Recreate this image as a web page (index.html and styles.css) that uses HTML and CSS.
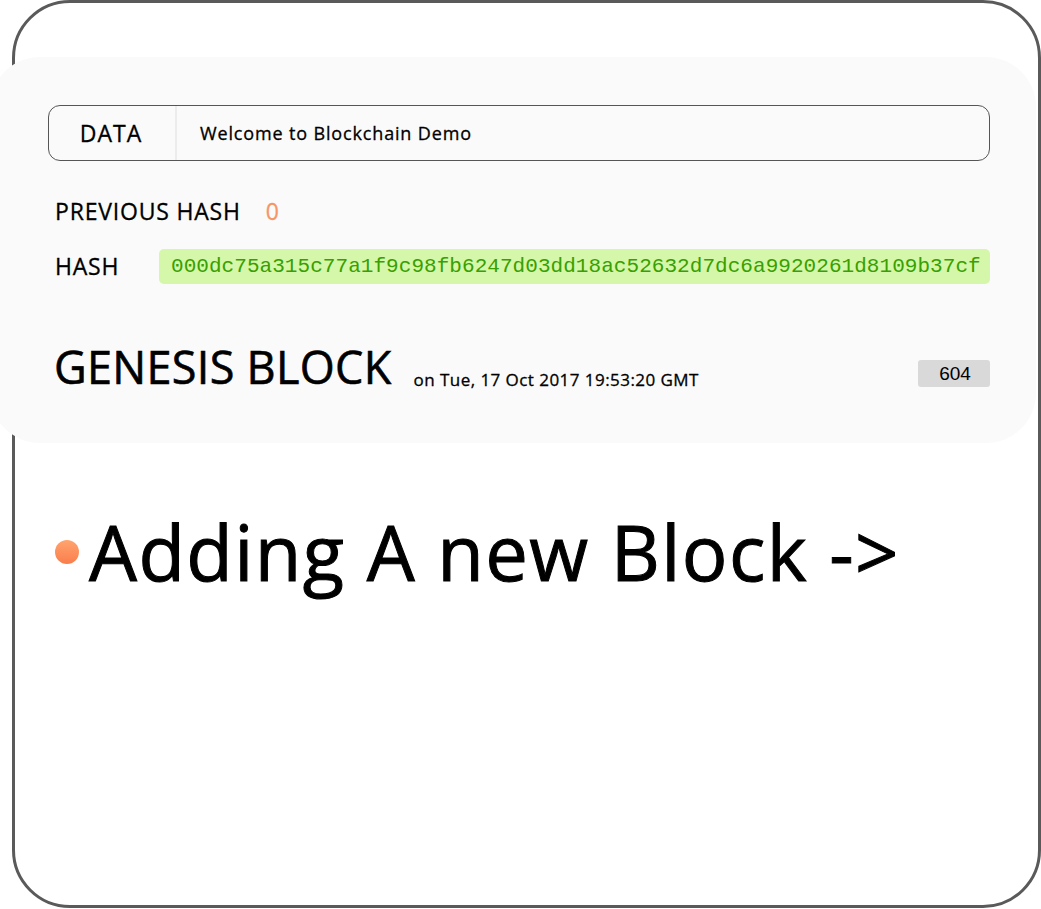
FILE: index.html
```html
<!DOCTYPE html>
<html lang="en">
<head>
<meta charset="utf-8">
<title>Blockchain Demo</title>
<link rel="stylesheet" href="styles.css">
</head>
<body>
<div class="frame">
  <section class="block">
    <div class="data-row">
      <div class="data-label">DATA</div>
      <div class="data-value">Welcome to Blockchain Demo</div>
    </div>
    <div class="field prev-row">
      <span class="label prev-label">PREVIOUS HASH</span>
      <span class="prev">0</span>
    </div>
    <div class="field hash-row">
      <span class="label hash-label">HASH</span>
      <span class="hash">000dc75a315c77a1f9c98fb6247d03dd18ac52632d7dc6a9920261d8109b37cf</span>
    </div>
    <div class="footer">
      <h2 class="title">GENESIS BLOCK</h2>
      <span class="date">on Tue, 17 Oct 2017 19:53:20 GMT</span>
      <span class="nonce">604</span>
    </div>
  </section>
  <h1 class="adding"><span class="dot"></span><span class="adding-text">Adding A new Block -&gt;</span></h1>
</div>
</body>
</html>
```

FILE: styles.css
```css
* { box-sizing: border-box; }
html, body { margin: 0; padding: 0; background: #ffffff; }
body {
  font-family: "Open Sans", "DejaVu Sans", sans-serif;
  color: #000;
  -webkit-text-stroke: 0.3px #000;
}
.frame {
  margin-left: 12px;
  width: 1029px;
  height: 908px;
  border: 3px solid #5a5a5a;
  border-radius: 58px;
  background: #fff;
  padding-top: 54px;
}
.block {
  margin-left: -25px;
  margin-right: 2px;
  height: 386px;
  background: #fafafa;
  border-radius: 50px;
  padding: 48px 46px 0 58px;
}
.data-row {
  display: flex;
  height: 56px;
  border: 1px solid #555;
  border-radius: 12px;
  align-items: stretch;
}
.data-label {
  width: 128px;
  border-right: 2px solid #ececec;
  display: flex;
  align-items: center;
  justify-content: center;
  font-size: 23px;
  letter-spacing: 1px;
  padding-right: 2px;
}
.data-value {
  display: flex;
  align-items: center;
  padding-left: 23px;
  font-size: 18px;
  letter-spacing: 0.85px;
}
.field {
  display: flex;
  align-items: center;
  padding-left: 7px;
}
.label { font-size: 23px; letter-spacing: 0.8px; }
.prev-row { height: 36px; margin-top: 32px; }
.prev { font-size: 23px; color: #f7956a; margin-left: 25px; -webkit-text-stroke: 0.3px #f7956a; }
.hash-row { height: 36px; margin-top: 19px; }
.hash-label { width: 104px; }
.hash {
  flex: 1;
  height: 35px;
  background: #d5f7a9;
  border-radius: 5px;
  color: #38a000;
  -webkit-text-stroke: 0;
  font-family: "Liberation Mono", "Courier New", monospace;
  font-weight: 400;
  font-size: 21px;
  letter-spacing: 0.05px;
  display: flex;
  align-items: center;
  padding-left: 12px;
  white-space: nowrap;
  overflow: hidden;
}
.footer {
  display: flex;
  align-items: flex-end;
  margin-top: 60px;
  padding-left: 6px;
}
.title {
  margin: 0;
  font-size: 45px;
  font-weight: 400;
  line-height: 1;
  letter-spacing: 0.3px;
  -webkit-text-stroke: 0.6px #000;
}
.date {
  font-size: 17px;
  margin-left: 22px;
  line-height: 1;
  padding-bottom: 1px;
  letter-spacing: 0.45px;
}
.nonce {
  margin-left: auto;
  width: 72px;
  height: 27px;
  background: #d9d9d9;
  border-radius: 3px;
  font-family: "Liberation Sans", Arial, sans-serif;
  font-weight: 400;
  -webkit-text-stroke: 0;
  font-size: 19px;
  display: flex;
  align-items: center;
  justify-content: center;
  padding-left: 2px;
  margin-bottom: 2px;
}
.adding {
  margin: 71px 0 0 40px;
  display: flex;
  align-items: center;
  font-weight: 400;
  font-size: 76px;
  line-height: 1;
  letter-spacing: 1.4px;
  -webkit-text-stroke: 1px #000;
}
.dot {
  width: 24px;
  height: 24px;
  border-radius: 50%;
  background: linear-gradient(#ffa46e, #fa7d4c);
  margin-right: 10px;
  flex-shrink: 0;
}
```
